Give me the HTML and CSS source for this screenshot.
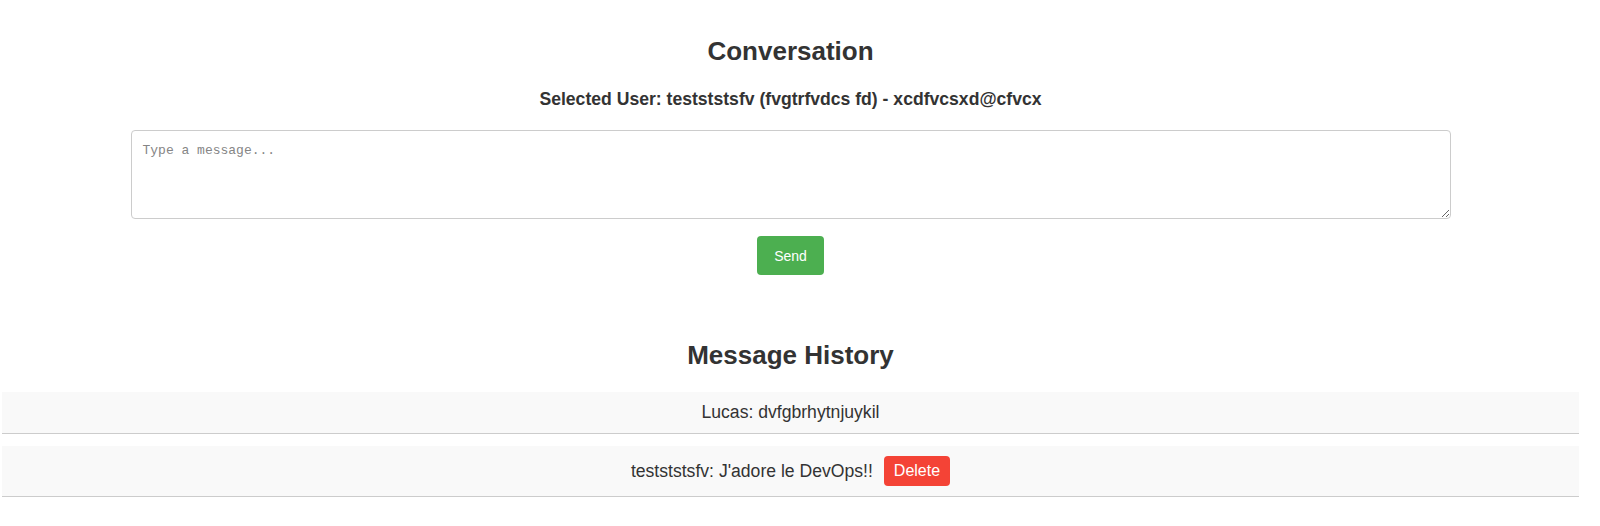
FILE: index.html
```html
<!DOCTYPE html>
<html lang="en">
<head>
<meta charset="utf-8">
<title>Conversation</title>
<link rel="stylesheet" href="styles.css">
</head>
<body>
<div class="page">
  <section class="conversation">
    <h2 class="title">Conversation</h2>
    <h3 class="selected">Selected User: testststsfv (fvgtrfvdcs fd) - xcdfvcsxd@cfvcx</h3>
    <textarea class="composer" placeholder="Type a message..."></textarea>
    <button class="send" type="button">Send</button>
  </section>
  <section class="history">
    <h2 class="title history-title">Message History</h2>
    <ul class="messages">
      <li class="message"><span class="message-text">Lucas: dvfgbrhytnjuykil</span></li>
      <li class="message"><span class="message-text">testststsfv: J'adore le DevOps!!</span><button class="delete" type="button">Delete</button></li>
    </ul>
  </section>
</div>
</body>
</html>
```

FILE: styles.css
```css
html, body {
  margin: 0;
  padding: 0;
  background: #ffffff;
}

body {
  font-family: "Liberation Sans", Arial, sans-serif;
  color: #333333;
}

.page {
  width: 1581px;
  padding-top: 37px;
}

.conversation {
  display: flex;
  flex-direction: column;
  align-items: center;
}

.title {
  margin: 0;
  font-size: 26px;
  line-height: 29px;
  font-weight: bold;
  color: #333333;
  text-align: center;
}

.selected {
  margin: 23px 0 0 0;
  font-size: 17.6px;
  line-height: 20px;
  font-weight: bold;
  color: #333333;
}

.composer {
  box-sizing: border-box;
  width: 1320px;
  height: 89px;
  margin-top: 21px;
  padding: 12px 11px 10px 11px;
  border: 1px solid #cccccc;
  border-radius: 4px;
  font-family: "Liberation Mono", "DejaVu Sans Mono", monospace;
  font-size: 13px;
  line-height: 15px;
  color: #333333;
  background: #ffffff;
  resize: vertical;
}

.composer::placeholder {
  color: #858585;
}

.send {
  box-sizing: border-box;
  margin-top: 17px;
  height: 39px;
  padding: 0 17px;
  border: none;
  border-radius: 4px;
  background: #4caf50;
  color: #ffffff;
  font-family: "Liberation Sans", Arial, sans-serif;
  font-size: 14px;
  cursor: pointer;
}

.history {
  margin-top: 66px;
}

.messages {
  list-style: none;
  margin: 22px 0 0 0;
  padding: 0;
  display: flex;
  flex-direction: column;
  gap: 12px;
}

.message {
  margin: 0 2px;
  padding: 10px;
  min-height: 21px;
  background: #f9f9f9;
  border-bottom: 1px solid #cccccc;
  display: flex;
  justify-content: center;
  align-items: center;
  gap: 11px;
  font-size: 17.6px;
  line-height: 21px;
  color: #333333;
}

.delete {
  box-sizing: border-box;
  height: 30px;
  padding: 0 10px;
  border: none;
  border-radius: 4px;
  background: #f44336;
  color: #ffffff;
  font-family: "Liberation Sans", Arial, sans-serif;
  font-size: 16px;
  cursor: pointer;
}
```
